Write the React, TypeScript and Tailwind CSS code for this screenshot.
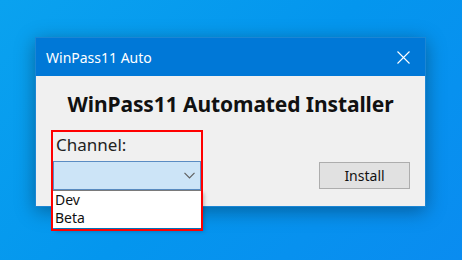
import React from 'react';

const font = { fontFamily: '"Noto Sans", "Open Sans", sans-serif' };

const CloseIcon: React.FC = () => (
  <svg width="13" height="13" viewBox="0 0 13 13" fill="none" stroke="white" strokeWidth="1.1">
    <path d="M0.5 0.5 L12.5 12.5 M12.5 0.5 L0.5 12.5" />
  </svg>
);

const Chevron: React.FC = () => (
  <svg width="11" height="7" viewBox="0 0 11 7" fill="none" stroke="#606060" strokeWidth="1.2">
    <path d="M0.5 0.8 L5.5 5.8 L10.5 0.8" />
  </svg>
);

const App: React.FC = () => {
  return (
    <div
      className="w-[462px] h-[260px] overflow-hidden bg-[linear-gradient(135deg,#0aa2ef_0%,#0496ee_50%,#0a8cf0_100%)] pt-[37px] pl-[35px]"
      style={font}
    >
      {/* Window */}
      <div className="w-[391px] flex flex-col shadow-[0_4px_18px_rgba(0,0,0,0.35)] border border-[#1c86d4]">
        {/* Title bar */}
        <div className="h-[38px] bg-[#0078d7] flex items-center justify-between pl-[10px] pr-[15px]">
          <span className="text-white text-[14px]">WinPass11 Auto</span>
          <CloseIcon />
        </div>

        {/* Body */}
        <div className="h-[130px] bg-[#f0f0f0] flex flex-col pt-[12px]">
          <h1 className="text-center text-[21px] font-bold text-[#111] leading-[32px] tracking-[-0.1px]">
            WinPass11 Automated Installer
          </h1>

          <div className="flex items-start justify-between mt-[10px] pl-[15px] pr-[15px]">
            {/* Channel group with dropdown open */}
            <div className="relative w-[152px]">
              <div className="px-[2px] pt-[2px]">
                <div className="text-[17px] text-[#222] leading-[26px] pl-[3px]">Channel:</div>
                <div className="h-[29px] bg-[#cce4f7] border border-[#5a8cc3] flex items-center justify-end pr-[5px] mt-[3px]">
                  <Chevron />
                </div>
              </div>
              {/* Dropdown list overlays the window edge */}
              <div className="absolute left-[2px] right-[2px] top-[60px] h-[38px] bg-white border-t border-[#7a7a7a] flex flex-col text-[14px] text-[#111] leading-[18px] pl-[2px] shadow-[3px_3px_4px_rgba(0,0,0,0.25)]">
                <span>Dev</span>
                <span>Beta</span>
              </div>
              {/* Red annotation box */}
              <div className="absolute left-0 top-0 w-[152px] h-[101px] border-2 border-[#ff0000] pointer-events-none" />
            </div>

            <button className="mt-[32px] w-[91px] h-[27px] bg-[#e1e1e1] border border-[#adadad] text-[14px] text-[#111] flex items-center justify-center">
              Install
            </button>
          </div>
        </div>
      </div>
    </div>
  );
};

export default App;
